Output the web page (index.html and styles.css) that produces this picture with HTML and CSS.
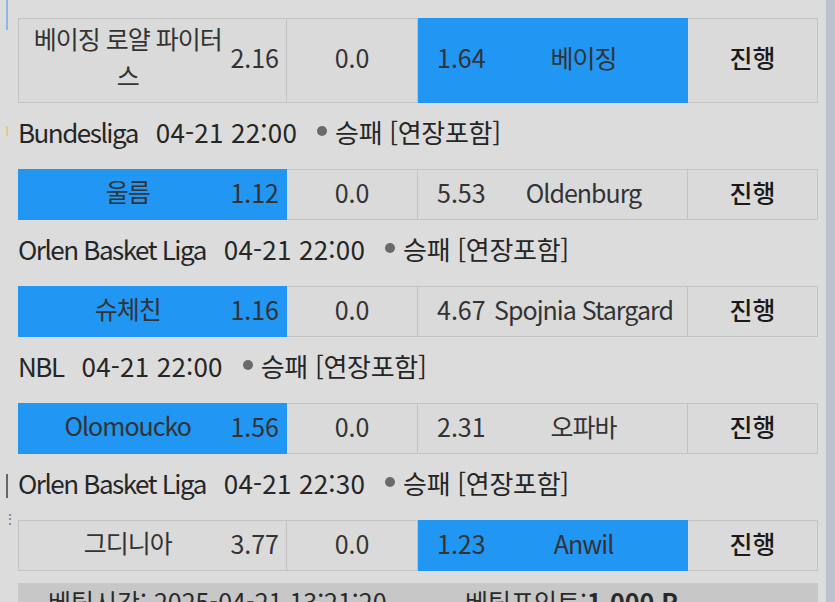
FILE: index.html
```html
<!DOCTYPE html>
<html lang="ko">
<head>
<meta charset="utf-8">
<title>Betting list</title>
<link rel="stylesheet" href="styles.css">
</head>
<body>
<div class="page">
  <main class="content">
    <section class="match tall">
      <div class="cell home"><span class="team">베이징 로얄 파이터스</span><span class="odds">2.16</span></div>
      <div class="cell draw">0.0</div>
      <div class="cell away on"><span class="odds">1.64</span><span class="team">베이징</span></div>
      <div class="cell status">진행</div>
    </section>

    <div class="league"><span class="lname">Bundesliga</span><span class="ltime">04-21 22:00</span><span class="dot"></span><span class="market">승패 [연장포함]</span></div>
    <section class="match">
      <div class="cell home on"><span class="team">울름</span><span class="odds">1.12</span></div>
      <div class="cell draw">0.0</div>
      <div class="cell away"><span class="odds">5.53</span><span class="team">Oldenburg</span></div>
      <div class="cell status">진행</div>
    </section>

    <div class="league"><span class="lname">Orlen Basket Liga</span><span class="ltime">04-21 22:00</span><span class="dot"></span><span class="market">승패 [연장포함]</span></div>
    <section class="match">
      <div class="cell home on"><span class="team">슈체친</span><span class="odds">1.16</span></div>
      <div class="cell draw">0.0</div>
      <div class="cell away"><span class="odds">4.67</span><span class="team">Spojnia Stargard</span></div>
      <div class="cell status">진행</div>
    </section>

    <div class="league"><span class="lname">NBL</span><span class="ltime">04-21 22:00</span><span class="dot"></span><span class="market">승패 [연장포함]</span></div>
    <section class="match">
      <div class="cell home on"><span class="team">Olomoucko</span><span class="odds">1.56</span></div>
      <div class="cell draw">0.0</div>
      <div class="cell away"><span class="odds">2.31</span><span class="team">오파바</span></div>
      <div class="cell status">진행</div>
    </section>

    <div class="league"><span class="lname">Orlen Basket Liga</span><span class="ltime">04-21 22:30</span><span class="dot"></span><span class="market">승패 [연장포함]</span></div>
    <section class="match">
      <div class="cell home"><span class="team">그디니아</span><span class="odds">3.77</span></div>
      <div class="cell draw">0.0</div>
      <div class="cell away on"><span class="odds">1.23</span><span class="team">Anwil</span></div>
      <div class="cell status">진행</div>
    </section>

    <div class="footer"><span class="ftime">베팅시간: 2025-04-21 13:21:20</span><span class="fpoint">베팅포인트:<b>1,000 P</b></span></div>

    <span class="edge edge-blue"></span>
    <span class="edge edge-yellow"></span>
    <span class="edge edge-bar"></span>
    <span class="edge edge-dots">⋮</span>
  </main>
  <div class="scrollstrip"></div>
</div>
</body>
</html>
```

FILE: styles.css
```css
* { box-sizing: border-box; }
html, body { margin: 0; padding: 0; }
body {
  background: #dcdcdc;
  font-family: "Noto Sans CJK KR", "Noto Sans", sans-serif;
  color: #2a2a2a;
  overflow: hidden;
}
.page {
  display: flex;
  width: 835px;
  height: 602px;
  overflow: hidden;
}
.content {
  position: relative;
  flex: 1;
  padding: 18px 8px 0 18px;
}
.scrollstrip {
  width: 9px;
  background: #bcc3cf;
}
.match {
  display: grid;
  grid-template-columns: 269px 131px 270px 130px;
  height: 51px;
  font-size: 25px;
  color: #333;
}
.match.tall { height: 85px; }
.cell {
  display: flex;
  align-items: center;
  padding-bottom: 6px;
  border: 1px solid #c3c3c3;
  border-left: none;
  background: #dadada;
}
.tall .cell { padding-bottom: 8px; }
.cell.home { border-left: 1px solid #c3c3c3; }
.cell.on { background: #2196f3; border-color: #2196f3; }
.team { letter-spacing: -1px; }
.home .team {
  flex: 1;
  text-align: center;
  line-height: 37px;
  padding: 0 0 0 6px;
}
.home .odds { padding-right: 7px; }
.away .odds { padding-left: 19px; width: 68px; }
.away .team { flex: 1; text-align: center; padding-right: 6px; }
.draw, .status { justify-content: center; }
.status { font-weight: 500; color: #1a1a1a; }
.league {
  display: flex;
  align-items: center;
  height: 66px;
  padding-bottom: 10px;
  font-size: 26px;
  color: #262626;
}
.lname { margin-right: 18px; letter-spacing: -1.5px; }
.ltime { margin-right: 20px; letter-spacing: 0.2px; }
.dot {
  width: 10px;
  height: 10px;
  border-radius: 50%;
  background: #6a6a6a;
  margin-right: 8px;
}
.market { letter-spacing: -0.3px; }
.footer {
  display: flex;
  margin-top: 12px;
  height: 40px;
  padding: 0 0 0 30px;
  background: #c7c7c7;
  font-size: 25px;
  line-height: 36px;
  color: #2a2a2a;
}
.ftime { width: 417px; }
.fpoint b { font-weight: 700; }
.edge { position: absolute; left: 6px; }
.edge-blue { top: 0; width: 2px; height: 30px; background: #8fb4e6; }
.edge-yellow { top: 126px; width: 2px; height: 10px; background: #e6c98a; }
.edge-bar { top: 474px; width: 2px; height: 24px; background: #666; }
.edge-dots { top: 508px; left: 3px; font-size: 14px; color: #777; }
```
